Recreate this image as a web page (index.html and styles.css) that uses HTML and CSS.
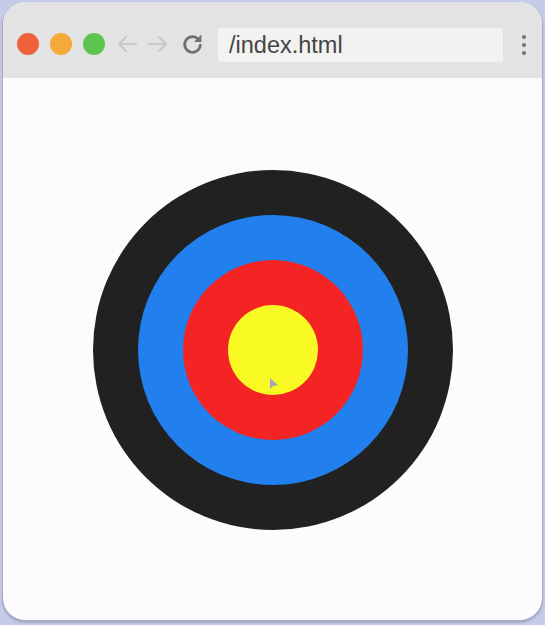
FILE: index.html
```html
<!DOCTYPE html>
<html>
<head>
<meta charset="utf-8">
<link rel="stylesheet" href="styles.css">
</head>
<body>
<div class="window">
  <div class="toolbar">
    <div class="lights">
      <span class="light red"></span>
      <span class="light orange"></span>
      <span class="light green"></span>
    </div>
    <div class="nav">
      <svg class="arrow" width="22" height="20" viewBox="0 0 22 20"><path d="M20 10H3M10 3L3 10L10 17" fill="none" stroke="#c9c9c9" stroke-width="2" stroke-linecap="round" stroke-linejoin="round"/></svg>
      <svg class="arrow" width="22" height="20" viewBox="0 0 22 20"><path d="M2 10H19M12 3L19 10L12 17" fill="none" stroke="#c9c9c9" stroke-width="2" stroke-linecap="round" stroke-linejoin="round"/></svg>
      <svg class="reload" width="25" height="25" viewBox="0 0 24 24"><path d="M19.5 12.5A7.5 7.5 0 1 1 17 6.4" fill="none" stroke="#6f6f6f" stroke-width="2.6" stroke-linecap="round"/><path d="M20.5 2.5V9.5H13.5Z" fill="#6f6f6f"/></svg>
    </div>
    <div class="url">/index.html</div>
    <div class="menu"><span></span><span></span><span></span></div>
  </div>
  <div class="content">
    <div class="ring black">
      <div class="ring blue">
        <div class="ring redring">
          <div class="ring yellow">
            <svg class="cursor" width="10" height="14" viewBox="0 0 10 14"><path d="M1 1L1 12L4 9L9 8Z" fill="#a9a4b6"/></svg>
          </div>
        </div>
      </div>
    </div>
  </div>
</div>
</body>
</html>
```
FILE: styles.css
```css
html, body {
  margin: 0;
  height: 100%;
}
body {
  background: #c6cbe9;
  padding: 2px 3px 5px 3px;
  box-sizing: border-box;
  display: flex;
  font-family: "Liberation Sans", Arial, sans-serif;
}
.window {
  flex: 1;
  display: flex;
  flex-direction: column;
  background: #fcfcfe;
  border-radius: 22px;
  overflow: hidden;
  box-shadow: 0 1px 0 1px #a7abc3, 0 2px 3px rgba(80, 86, 120, 0.5);
}
.toolbar {
  height: 76px;
  flex: none;
  background: #e3e3e3;
  display: flex;
  align-items: center;
  padding: 0 0 0 14px;
}
.lights {
  display: flex;
  gap: 11px;
  margin-top: 8px;
}
.light {
  width: 22px;
  height: 22px;
  border-radius: 50%;
  display: block;
}
.red { background: #f0613e; }
.orange { background: #f5a93a; }
.green { background: #5cc54f; }
.nav {
  display: flex;
  align-items: center;
  margin-left: 11px;
  margin-top: 8px;
}
.arrow { display: block; margin-right: 9px; }
.reload { display: block; margin-left: 2px; }
.url {
  margin-left: 13px;
  margin-top: 10px;
  width: 274px;
  height: 34px;
  background: #f2f2f2;
  border-radius: 3px;
  padding-left: 11px;
  font-size: 23.5px;
  line-height: 34px;
  color: #454545;
}
.menu {
  margin-left: 19px;
  margin-top: 10px;
  display: flex;
  flex-direction: column;
  gap: 4px;
}
.menu span {
  width: 4px;
  height: 4px;
  border-radius: 50%;
  background: #707070;
  display: block;
}
.content {
  flex: 1;
  display: flex;
  align-items: center;
  justify-content: center;
  padding-top: 1px;
}
.ring {
  border-radius: 50%;
  display: flex;
  align-items: center;
  justify-content: center;
}
.black { width: 360px; height: 360px; background: #212121; }
.blue { width: 270px; height: 270px; background: #2180ee; }
.redring { width: 180px; height: 180px; background: #f42424; }
.yellow { width: 90px; height: 90px; background: #f9f924; position: relative; }
.cursor {
  position: absolute;
  left: 41px;
  top: 72px;
}
```
